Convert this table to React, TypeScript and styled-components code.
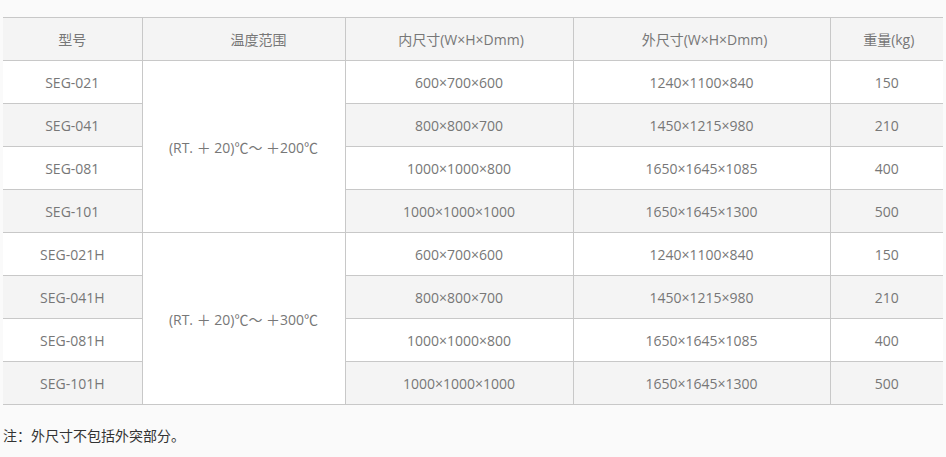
import styled, { createGlobalStyle } from 'styled-components';

type Spec = {
  model: string;
  inner: string;
  outer: string;
  weight: number;
};

type Group = {
  range: string;
  items: Spec[];
};

const groups: Group[] = [
  {
    range: '(RT. ＋ 20)℃～ ＋200℃',
    items: [
      { model: 'SEG-021', inner: '600×700×600', outer: '1240×1100×840', weight: 150 },
      { model: 'SEG-041', inner: '800×800×700', outer: '1450×1215×980', weight: 210 },
      { model: 'SEG-081', inner: '1000×1000×800', outer: '1650×1645×1085', weight: 400 },
      { model: 'SEG-101', inner: '1000×1000×1000', outer: '1650×1645×1300', weight: 500 },
    ],
  },
  {
    range: '(RT. ＋ 20)℃～ ＋300℃',
    items: [
      { model: 'SEG-021H', inner: '600×700×600', outer: '1240×1100×840', weight: 150 },
      { model: 'SEG-041H', inner: '800×800×700', outer: '1450×1215×980', weight: 210 },
      { model: 'SEG-081H', inner: '1000×1000×800', outer: '1650×1645×1085', weight: 400 },
      { model: 'SEG-101H', inner: '1000×1000×1000', outer: '1650×1645×1300', weight: 500 },
    ],
  },
];

const GlobalStyle = createGlobalStyle`
  body {
    margin: 0;
    background: #fafafa;
    font-family: "Open Sans", "Noto Sans CJK SC", sans-serif;
  }
`;

const Page = styled.div`
  width: 940px;
  padding: 17px 3px 0;
`;

const Table = styled.table`
  width: 940px;
  border-collapse: collapse;
  table-layout: fixed;
  font-size: 14px;
  color: #777;
`;

const Row = styled.tr<{ $shade?: boolean }>`
  background: ${(p) => (p.$shade ? '#f4f4f4' : '#fff')};
`;

const Cell = styled.td`
  height: 42px;
  padding: 0;
  text-align: center;
  vertical-align: middle;
  border: 1px solid #c8c8c8;
  &:first-child {
    border-left: none;
  }
  &:last-child {
    border-right: none;
  }
`;

const Head = styled(Cell).attrs({ as: 'th' })<{ $shift?: number }>`
  font-weight: 400;
  background: #f4f4f4;
  padding-left: ${(p) => p.$shift ?? 0}px;
`;

const RangeCell = styled(Cell)`
  background: #fff;
`;

const Note = styled.p`
  margin: 20px 0 0;
  font-size: 14px;
  color: #333;
  font-family: "Noto Sans CJK SC", sans-serif;
`;

const App = () => {
  return (
    <Page>
      <GlobalStyle />
      <Table>
        <colgroup>
          <col style={{ width: 139 }} />
          <col style={{ width: 203 }} />
          <col style={{ width: 228 }} />
          <col style={{ width: 257 }} />
          <col style={{ width: 113 }} />
        </colgroup>
        <thead>
          <Row $shade>
            <Head>型号</Head>
            <Head $shift={30}>温度范围</Head>
            <Head $shift={4}>内尺寸(W×H×Dmm)</Head>
            <Head $shift={6}>外尺寸(W×H×Dmm)</Head>
            <Head $shift={4}>重量(kg)</Head>
          </Row>
        </thead>
        <tbody>
          {groups.map((g) =>
            g.items.map((item, i) => (
              <Row key={item.model} $shade={i % 2 === 1}>
                <Cell>{item.model}</Cell>
                {i === 0 && <RangeCell rowSpan={g.items.length}>{g.range}</RangeCell>}
                <Cell>{item.inner}</Cell>
                <Cell>{item.outer}</Cell>
                <Cell>{item.weight}</Cell>
              </Row>
            ))
          )}
        </tbody>
      </Table>
      <Note>注：外尺寸不包括外突部分。</Note>
    </Page>
  );
};

export default App;
